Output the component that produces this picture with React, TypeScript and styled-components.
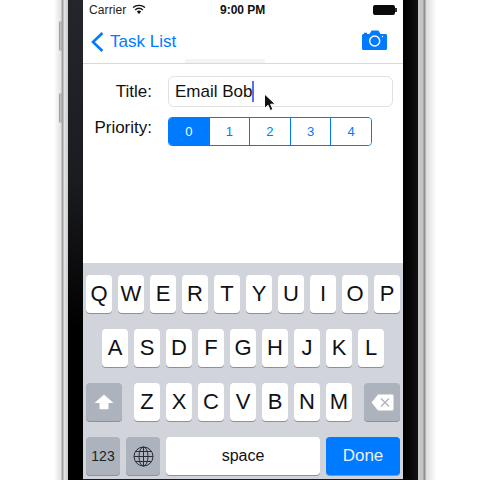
import styled, { createGlobalStyle } from "styled-components";

const rows = ["QWERTYUIOP", "ASDFGHJKL", "ZXCVBNM"];
const segments = ["0", "1", "2", "3", "4"];

const blue = "#007aff";

export default function App() {
  return (
    <Page>
      <GlobalStyle />
      <Phone>
        <SideButton $top={21} />
        <SideButton $top={93} />
        <LeftBezel />
        <Screen>
          <StatusBar>
            <Carrier>Carrier</Carrier>
            <WifiIcon />
            <Clock>9:00 PM</Clock>
            <Battery>
              <BatteryNub />
            </Battery>
          </StatusBar>
          <NavBar>
            <BackLink>
              <ChevronIcon />
              <span>Task List</span>
            </BackLink>
            <CameraIcon />
            <NavGlow />
          </NavBar>
          <Form>
            <TitleRow>
              <FieldLabel>Title:</FieldLabel>
              <TextField>
                Email Bob
                <Caret />
              </TextField>
            </TitleRow>
            <PriorityRow>
              <PriorityLabel>Priority:</PriorityLabel>
              <SegmentGroup>
                {segments.map((s, i) => (
                  <Segment key={s} $active={i === 0}>
                    {s}
                  </Segment>
                ))}
              </SegmentGroup>
            </PriorityRow>
            <Pointer />
          </Form>
          <Keyboard>
            <KeyRow>
              {rows[0].split("").map((k) => (
                <Key key={k}>{k}</Key>
              ))}
            </KeyRow>
            <CenterRow>
              {rows[1].split("").map((k) => (
                <Key key={k}>{k}</Key>
              ))}
            </CenterRow>
            <KeyRow>
              <ActionKey>
                <ShiftIcon />
              </ActionKey>
              <LetterGroup>
                {rows[2].split("").map((k) => (
                  <Key key={k}>{k}</Key>
                ))}
              </LetterGroup>
              <ActionKey>
                <DeleteIcon />
              </ActionKey>
            </KeyRow>
            <BottomRow>
              <ModeKey>123</ModeKey>
              <ModeKey>
                <GlobeIcon />
              </ModeKey>
              <SpaceKey>space</SpaceKey>
              <DoneKey>Done</DoneKey>
            </BottomRow>
          </Keyboard>
        </Screen>
        <RightBezel />
      </Phone>
    </Page>
  );
}

function WifiIcon() {
  return (
    <WifiSvg viewBox="0 0 14 10" width="14" height="10" fill="none" stroke="#111" strokeWidth="1.4">
      <path d="M1 3.6C4.4.6 9.6.6 13 3.6" />
      <path d="M3.2 5.9c2.2-1.9 5.4-1.9 7.6 0" />
      <path d="M5.3 8c1-.8 2.4-.8 3.4 0" />
      <path d="M7 10 5.6 8.4c.8-.6 2-.6 2.8 0z" fill="#111" stroke="none" />
    </WifiSvg>
  );
}

function ChevronIcon() {
  return (
    <svg viewBox="0 0 13 20" width="13" height="20" fill="none" stroke={blue} strokeWidth="2.6">
      <path d="M11.4 1 2 10l9.4 9" />
    </svg>
  );
}

function CameraIcon() {
  return (
    <CameraSvg viewBox="0 0 25 20" width="25" height="20">
      <path
        d="M0 5.5C0 4.6.6 4 1.5 4H2V2.8h3V4h2.5L9.6.4h6.8L18.5 4h5c.9 0 1.5.6 1.5 1.5v13c0 .9-.6 1.500-1.500 1.500h-22C.6 20 0 19.400 0 18.500z"
        fill={blue}
      />
      <circle cx="12.700" cy="11" r="5" fill="none" stroke="#fff" strokeWidth="1.400" />
      <circle cx="20.500" cy="6.500" r=".7" fill="#fff" />
    </CameraSvg>
  );
}

function Pointer() {
  return (
    <PointerSvg viewBox="0 0 14 20" width="14" height="20">
      <path
        d="M1.500 1v14.500l3.500-3.300 2.300 5.300 2.600-1.100-2.300-5.200h4.700z"
        fill="#111"
        stroke="#fff"
        strokeWidth="1"
        strokeLinejoin="round"
      />
    </PointerSvg>
  );
}

function ShiftIcon() {
  return (
    <svg viewBox="0 0 20 16" width="20" height="16">
      <path d="M10 .5 19.500 9H14.500v5.500c0 .5-.3.800-.8.800H6.300c-.5 0-.8-.3-.8-.8V9H.5z" fill="#fff" />
    </svg>
  );
}

function DeleteIcon() {
  return (
    <svg viewBox="0 0 23 17" width="23" height="17">
      <path
        d="M7 .5h14c.9 0 1.500.6 1.500 1.500v13c0 .9-.6 1.500-1.500 1.500H7L.5 8.500z"
        fill="#fff"
      />
      <path d="m10 4.500 8 8m0-8-8 8" stroke="#acb3bd" strokeWidth="1.300" />
    </svg>
  );
}

function GlobeIcon() {
  return (
    <svg viewBox="0 0 21 21" width="21" height="21" fill="none" stroke="#2b2d33" strokeWidth="1">
      <circle cx="10.500" cy="10.500" r="9.500" />
      <ellipse cx="10.500" cy="10.500" rx="4.500" ry="9.500" />
      <path d="M10.500 1v19M1 10.500h19M2.500 5.500h16M2.500 15.500h16" />
    </svg>
  );
}

const GlobalStyle = createGlobalStyle`
  html, body {
    margin: 0;
    background: #fff;
    font-family: "Liberation Sans", Arial, sans-serif;
  }
`;

const Page = styled.div`
  width: 480px;
  height: 480px;
  overflow: hidden;
  background: #fff;
`;

// the rim on both sides is painted as one gradient behind the bezels
const Phone = styled.div`
  position: relative;
  display: flex;
  height: 480px;
  padding-left: 68px;
  background: linear-gradient(
    to right,
    #fff 54px,
    #ededed 58px,
    #e4e4e4 61px,
    #a6a6a6 62px,
    #9a9a9a 63px,
    #e9e9e9 64px,
    #d0d0d0 67px,
    #d0d0d0 68px,
    #000 68px,
    #000 418px,
    #c8c8c8 418px,
    #c4c4c4 423px,
    #8f8f8f 424px,
    #8f8f8f 425px,
    #dcdcdc 426px,
    #ececec 431px,
    #fff 436px
  );
`;

const SideButton = styled.div<{ $top: number }>`
  position: absolute;
  left: 59px;
  top: ${(p) => p.$top}px;
  width: 3px;
  height: 30px;
  border-radius: 2px 0 0 2px;
  background: linear-gradient(to right, #8e8e8e, #c9c9c9 60%, #a0a0a0);
`;

const LeftBezel = styled.div`
  width: 15px;
  background: linear-gradient(to bottom, #25262c 0, #1b1c20 180px, #000 330px);
`;

const RightBezel = styled.div`
  width: 15px;
  background: linear-gradient(to right, #000 0, #000 1px, #111 14px);
`;

const Screen = styled.div`
  position: relative;
  display: flex;
  flex-direction: column;
  width: 320px;
  height: 480px;
  background: #fff;
  color: #111;
`;

const StatusBar = styled.div`
  position: relative;
  display: flex;
  align-items: center;
  height: 20px;
  padding: 0 7px 0 6px;
  box-sizing: border-box;
  font-size: 12px;
`;

const Carrier = styled.span`
  color: #222;
  letter-spacing: 0.1px;
`;

const WifiSvg = styled.svg`
  margin-left: 6px;
  margin-bottom: 2px;
`;

const Clock = styled.span`
  position: absolute;
  left: 137px;
  font-weight: 700;
  color: #111;
`;

const Battery = styled.div`
  position: relative;
  width: 22px;
  height: 10px;
  margin-left: auto;
  margin-right: 1px;
  margin-bottom: 1px;
  border-radius: 2px;
  background: #0a0a0a;
`;

const BatteryNub = styled.div`
  position: absolute;
  right: -2px;
  top: 3px;
  width: 2px;
  height: 4px;
  background: #333;
`;

const NavBar = styled.div`
  position: relative;
  display: flex;
  align-items: center;
  justify-content: space-between;
  height: 44px;
  padding: 0 16px 0 8px;
  box-sizing: border-box;
  border-bottom: 1px solid #d9d9d9;
`;

const BackLink = styled.div`
  display: flex;
  align-items: center;
  gap: 6px;
  font-size: 17px;
  color: ${blue};
`;

const CameraSvg = styled.svg`
  display: block;
  margin-bottom: 3px;
`;

const NavGlow = styled.div`
  position: absolute;
  left: 102px;
  bottom: 0;
  width: 80px;
  height: 4px;
  background: #f4f4f4;
`;

const Form = styled.div`
  position: relative;
  flex: 1;
  display: flex;
  flex-direction: column;
  gap: 10px;
  padding-top: 12px;
`;

const TitleRow = styled.div`
  display: flex;
  align-items: center;
`;

const PriorityRow = styled.div`
  display: flex;
  align-items: flex-start;
`;

const FieldLabel = styled.label`
  width: 69px;
  margin-right: 16px;
  text-align: right;
  font-size: 17px;
  line-height: 20px;
  color: #111;
`;

const PriorityLabel = styled(FieldLabel)`
  margin-top: 1px;
`;

const TextField = styled.div`
  display: flex;
  align-items: center;
  box-sizing: border-box;
  width: 225px;
  height: 31px;
  padding-left: 6px;
  border: 1px solid #e1e1e1;
  border-radius: 6px;
  font-size: 17px;
  color: #111;
`;

const Caret = styled.span`
  width: 2px;
  height: 21px;
  background: #5b6df2;
`;

const SegmentGroup = styled.div`
  display: flex;
  box-sizing: border-box;
  width: 204px;
  height: 29px;
  border: 1px solid ${blue};
  border-radius: 4px;
  overflow: hidden;
`;

const Segment = styled.div<{ $active?: boolean }>`
  flex: 1;
  display: flex;
  align-items: center;
  justify-content: center;
  font-size: 13px;
  color: ${(p) => (p.$active ? "#fff" : blue)};
  background: ${(p) => (p.$active ? blue : "#fff")};
  & + & {
    border-left: 1px solid ${blue};
  }
`;

const PointerSvg = styled.svg`
  position: absolute;
  left: 180px;
  top: 29px;
`;

const Keyboard = styled.div`
  display: flex;
  flex-direction: column;
  gap: 16px;
  box-sizing: border-box;
  height: 217px;
  padding: 12px 3px 0;
  background: #d1d5db;
  border-bottom: 1px solid #1a1a1a;
`;

const KeyRow = styled.div`
  display: flex;
  justify-content: space-between;
  height: 38px;
`;

const CenterRow = styled(KeyRow)`
  justify-content: center;
  gap: 6px;
`;

const LetterGroup = styled.div`
  display: flex;
  gap: 6px;
`;

const BottomRow = styled(KeyRow)`
  gap: 6px;
  justify-content: flex-start;
`;

const Key = styled.div`
  display: flex;
  align-items: center;
  justify-content: center;
  width: 26px;
  height: 38px;
  border-radius: 4px;
  background: #fff;
  box-shadow: 0 1px 0 #8f9196;
  font-size: 22px;
  color: #111;
`;

const ActionKey = styled(Key)`
  width: 36px;
  background: #acb3bd;
`;

const ModeKey = styled(Key)`
  width: 34px;
  background: #acb3bd;
  font-size: 14px;
  color: #222;
`;

const SpaceKey = styled(Key)`
  width: 154px;
  font-size: 16px;
`;

const DoneKey = styled(Key)`
  width: 74px;
  background: ${blue};
  font-size: 17px;
  color: #e8f2ff;
`;
